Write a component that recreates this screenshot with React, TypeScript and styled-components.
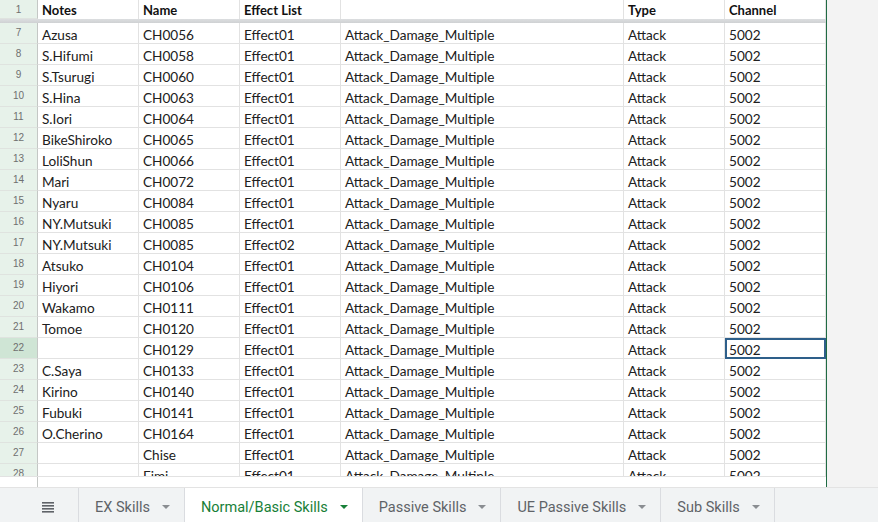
import styled, { createGlobalStyle } from "styled-components";

const GlobalStyle = createGlobalStyle`
  html, body {
    margin: 0;
    padding: 0;
    background: #ffffff;
  }
  body {
    width: 878px;
    height: 522px;
    overflow: hidden;
  }
`;

type Row = [number, string, string, string, string, string, string];

const rows: Row[] = [
  [7, "Azusa", "CH0056", "Effect01", "Attack_Damage_Multiple", "Attack", "5002"],
  [8, "S.Hifumi", "CH0058", "Effect01", "Attack_Damage_Multiple", "Attack", "5002"],
  [9, "S.Tsurugi", "CH0060", "Effect01", "Attack_Damage_Multiple", "Attack", "5002"],
  [10, "S.Hina", "CH0063", "Effect01", "Attack_Damage_Multiple", "Attack", "5002"],
  [11, "S.Iori", "CH0064", "Effect01", "Attack_Damage_Multiple", "Attack", "5002"],
  [12, "BikeShiroko", "CH0065", "Effect01", "Attack_Damage_Multiple", "Attack", "5002"],
  [13, "LoliShun", "CH0066", "Effect01", "Attack_Damage_Multiple", "Attack", "5002"],
  [14, "Mari", "CH0072", "Effect01", "Attack_Damage_Multiple", "Attack", "5002"],
  [15, "Nyaru", "CH0084", "Effect01", "Attack_Damage_Multiple", "Attack", "5002"],
  [16, "NY.Mutsuki", "CH0085", "Effect01", "Attack_Damage_Multiple", "Attack", "5002"],
  [17, "NY.Mutsuki", "CH0085", "Effect02", "Attack_Damage_Multiple", "Attack", "5002"],
  [18, "Atsuko", "CH0104", "Effect01", "Attack_Damage_Multiple", "Attack", "5002"],
  [19, "Hiyori", "CH0106", "Effect01", "Attack_Damage_Multiple", "Attack", "5002"],
  [20, "Wakamo", "CH0111", "Effect01", "Attack_Damage_Multiple", "Attack", "5002"],
  [21, "Tomoe", "CH0120", "Effect01", "Attack_Damage_Multiple", "Attack", "5002"],
  [22, "", "CH0129", "Effect01", "Attack_Damage_Multiple", "Attack", "5002"],
  [23, "C.Saya", "CH0133", "Effect01", "Attack_Damage_Multiple", "Attack", "5002"],
  [24, "Kirino", "CH0140", "Effect01", "Attack_Damage_Multiple", "Attack", "5002"],
  [25, "Fubuki", "CH0141", "Effect01", "Attack_Damage_Multiple", "Attack", "5002"],
  [26, "O.Cherino", "CH0164", "Effect01", "Attack_Damage_Multiple", "Attack", "5002"],
  [27, "", "Chise", "Effect01", "Attack_Damage_Multiple", "Attack", "5002"],
  [28, "", "Fimi", "Effect01", "Attack_Damage_Multiple", "Attack", "5002"],
];

const headers = ["Notes", "Name", "Effect List", "", "Type", "Channel"];
const tabs = ["EX Skills", "Normal/Basic Skills", "Passive Skills", "UE Passive Skills", "Sub Skills"];
const activeTab = 1;
const activeRow = 22;
const activeCol = 5;

const COLS = "38px 101px 101px 101px 283px 101px 101px";

export default function App() {
  return (
    <>
      <GlobalStyle />
      <Page>
        <GridArea>
          <Sheet>
            <HeaderRow>
              <RowNum>1</RowNum>
              {headers.map((h, i) => (
                <HeadCell key={i}>{h}</HeadCell>
              ))}
            </HeaderRow>
            <FreezeBar />
            <Body>
              {rows.map((r) => (
                <DataRow key={r[0]}>
                  <RowNum $active={r[0] === activeRow}>{r[0]}</RowNum>
                  {r.slice(1).map((v, i) => (
                    <Cell key={i} $selected={r[0] === activeRow && i === activeCol}>
                      {v}
                    </Cell>
                  ))}
                </DataRow>
              ))}
            </Body>
            <ScrollGap>
              <GapNum />
            </ScrollGap>
          </Sheet>
          <Filler />
        </GridArea>
        <TabBar>
          <MenuButton>
            <svg width="12" height="11" viewBox="0 0 12 11">
              <rect x="0" y="0" width="12" height="1.6" fill="#5f6368" />
              <rect x="0" y="3" width="12" height="1.6" fill="#5f6368" />
              <rect x="0" y="6" width="12" height="1.6" fill="#5f6368" />
              <rect x="0" y="9" width="12" height="1.6" fill="#5f6368" />
            </svg>
          </MenuButton>
          {tabs.map((t, i) => (
            <Tab key={t} $active={i === activeTab}>
              {t}
              <Caret $active={i === activeTab} />
            </Tab>
          ))}
        </TabBar>
      </Page>
    </>
  );
}

const Page = styled.div`
  width: 878px;
  height: 522px;
  display: flex;
  flex-direction: column;
  overflow: hidden;
`;

const GridArea = styled.div`
  display: flex;
  height: 487px;
`;

const Sheet = styled.div`
  width: 826px;
  display: flex;
  flex-direction: column;
  border-right: 1px solid #1f6b43;
`;

const Filler = styled.div`
  flex: 1;
  background: #f3f3f3;
`;

const HeaderRow = styled.div`
  display: grid;
  grid-template-columns: ${COLS};
  height: 19px;
`;

const FreezeBar = styled.div`
  height: 4px;
  background: linear-gradient(#dcdee0, #cfd1d3);
`;

const Body = styled.div`
  height: 453px;
  overflow: hidden;
`;

const DataRow = styled.div`
  display: grid;
  grid-template-columns: ${COLS};
  height: 21px;
`;

const RowNum = styled.div<{ $active?: boolean }>`
  background: ${(p) => (p.$active ? "#cfe5d5" : "#e7f2ea")};
  border-right: 1px solid #c4c7c5;
  border-bottom: 1px solid #dfe3df;
  color: #6f6f6f;
  font-family: "Liberation Sans", Arial, sans-serif;
  font-size: 10px;
  display: flex;
  justify-content: center;
  padding-top: 4px;
  box-sizing: border-box;
`;

const CellBase = styled.div`
  font-family: Lato, "Liberation Sans", sans-serif;
  font-size: 13.6px;
  color: #202020;
  padding: 0 4px;
  display: flex;
  align-items: center;
  white-space: nowrap;
  overflow: hidden;
  box-sizing: border-box;
`;

const HeadCell = styled(CellBase)`
  font-size: 13px;
  font-weight: 700;
  color: #111;
  border-right: 1px solid #e2e2e2;
  padding-top: 1px;
`;

const Cell = styled(CellBase)<{ $selected?: boolean }>`
  border-right: 1px solid #e2e2e2;
  border-bottom: 1px solid #e2e2e2;
  padding-top: 3px;
  ${(p) =>
    p.$selected &&
    `
    outline: 2px solid #2e5f8a;
    outline-offset: -2px;
  `}
`;

const ScrollGap = styled.div`
  flex: 1;
  display: flex;
  border-top: 1px solid #e2e2e2;
`;

const GapNum = styled.div`
  width: 38px;
  border-right: 1px solid #c4c7c5;
  box-sizing: border-box;
`;

const TabBar = styled.div`
  flex: 1;
  display: flex;
  background: #f1f3f4;
  border-top: 1px solid #e3e3e3;
`;

const MenuButton = styled.div`
  width: 79px;
  display: flex;
  align-items: center;
  justify-content: center;
  padding: 4px 0 0 18px;
  box-sizing: border-box;
  border-right: 1px solid #dadce0;
`;

const Tab = styled.div<{ $active?: boolean }>`
  display: flex;
  align-items: center;
  gap: 10px;
  padding: 4px 14px 0 16px;
  font-family: Roboto, "Liberation Sans", sans-serif;
  font-size: 14.5px;
  font-weight: 400;
  color: ${(p) => (p.$active ? "#188038" : "#5f6368")};
  background: ${(p) => (p.$active ? "#ffffff" : "transparent")};
  border-right: 1px solid #dadce0;
  white-space: nowrap;
`;

const Caret = styled.span<{ $active?: boolean }>`
  width: 0;
  height: 0;
  border-left: 4px solid transparent;
  border-right: 4px solid transparent;
  border-top: 4px solid ${(p) => (p.$active ? "#188038" : "#8a8d91")};
  margin-left: 2px;
`;
